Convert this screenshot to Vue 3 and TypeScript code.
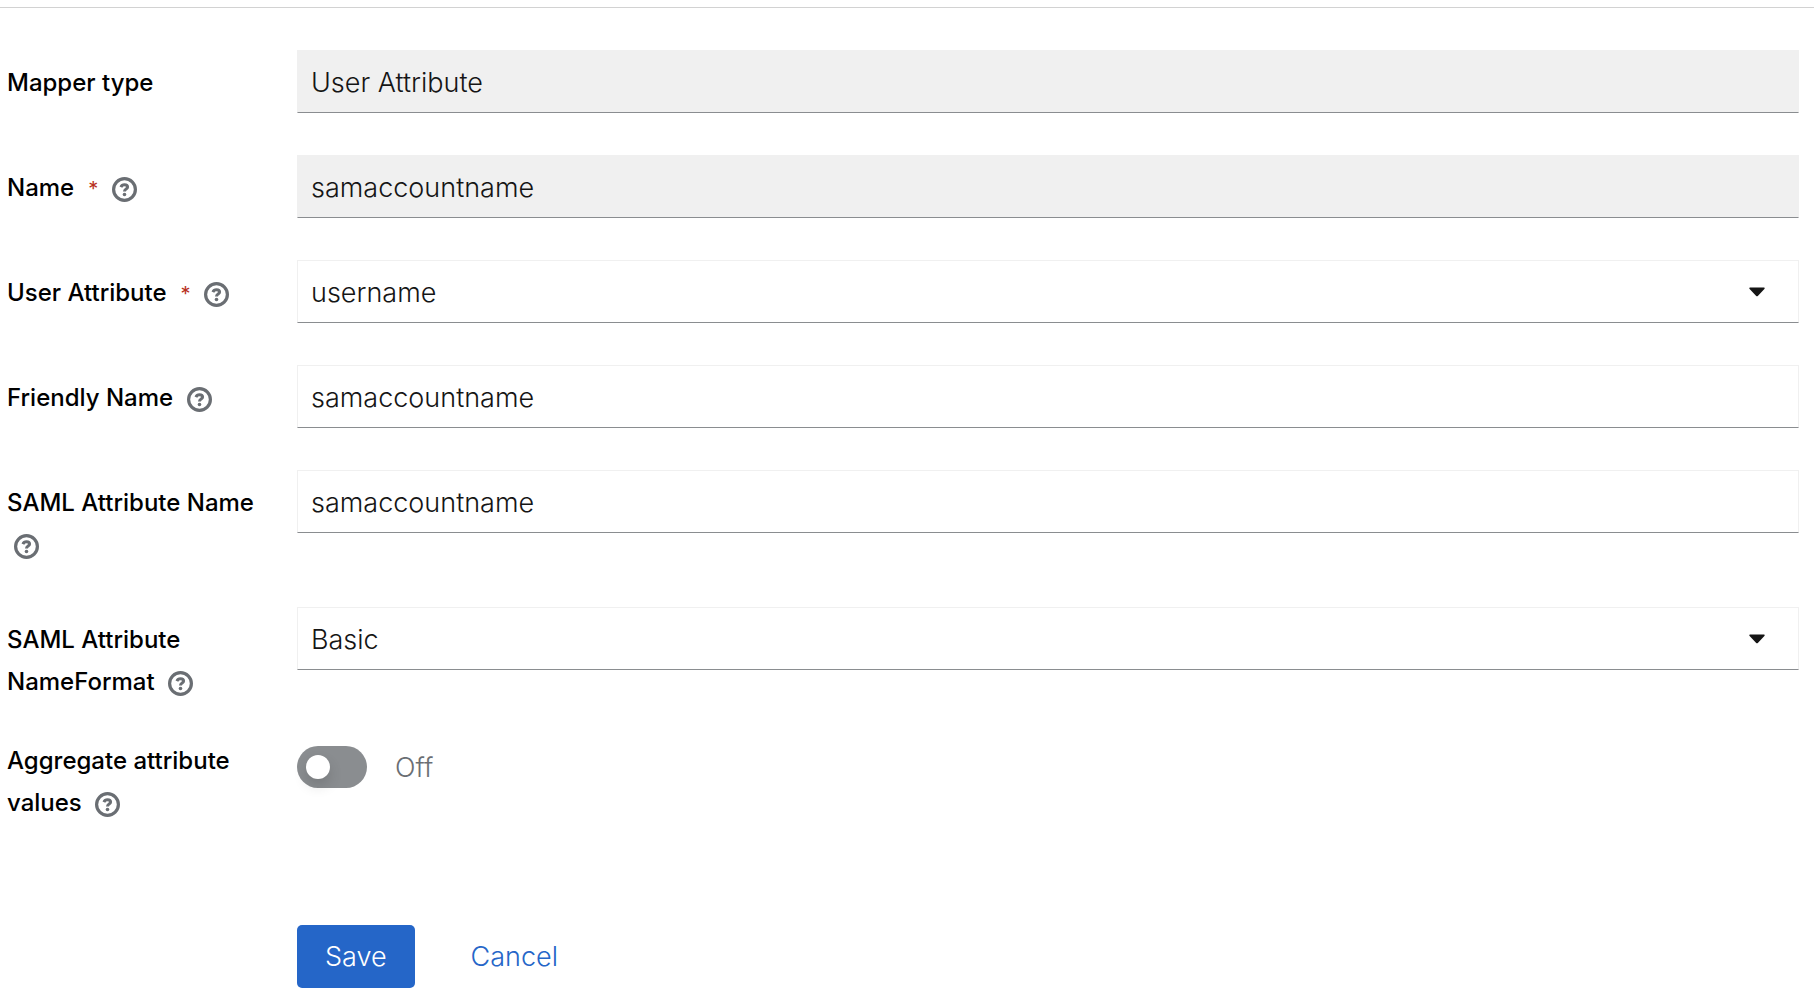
<script setup lang="ts">
import { reactive } from 'vue'

interface Field {
  id: string
  label: string
  kind: 'text' | 'select' | 'switch'
  required?: boolean
  help?: boolean
  readonly?: boolean
  options?: string[]
}

const fields: Field[] = [
  { id: 'mapperType', label: 'Mapper type', kind: 'text', readonly: true },
  { id: 'name', label: 'Name', kind: 'text', required: true, help: true, readonly: true },
  { id: 'userAttribute', label: 'User Attribute', kind: 'select', required: true, help: true, options: ['username'] },
  { id: 'friendlyName', label: 'Friendly Name', kind: 'text', help: true },
  { id: 'attributeName', label: 'SAML Attribute Name', kind: 'text', help: true },
  { id: 'nameFormat', label: 'SAML Attribute NameFormat', kind: 'select', help: true, options: ['Basic'] },
  { id: 'aggregate', label: 'Aggregate attribute values', kind: 'switch', help: true },
]

const values = reactive<Record<string, string>>({
  mapperType: 'User Attribute',
  name: 'samaccountname',
  userAttribute: 'username',
  friendlyName: 'samaccountname',
  attributeName: 'samaccountname',
  nameFormat: 'Basic',
})
const flags = reactive<Record<string, boolean>>({ aggregate: false })
</script>

<template>
  <main class="page">
    <form class="form" @submit.prevent>
      <div v-for="f in fields" :key="f.id" class="row" :class="{ 'row-switch': f.kind === 'switch' }">
        <div class="label-cell">
          <label class="label" :for="f.id">{{ f.label }}<span v-if="f.required" class="required" aria-hidden="true">*</span></label>
          {{ ' ' }}
          <button v-if="f.help" type="button" class="help" :aria-label="'Help for ' + f.label">
            <svg viewBox="0 0 25 25" aria-hidden="true">
              <circle cx="12.5" cy="12.5" r="10.9" fill="none" stroke="currentColor" stroke-width="3.2" />
              <path d="M8.9 10.1C9.6 8.5 10.8 7.8 12.5 7.8C14.5 7.8 15.6 8.8 15.6 10.1C15.6 12.1 12.5 12 12.5 14.4" fill="none" stroke="currentColor" stroke-width="3" />
              <circle cx="12.5" cy="17.5" r="1.8" fill="currentColor" />
            </svg>
          </button>
        </div>

        <input
          v-if="f.kind === 'text'"
          :id="f.id"
          v-model="values[f.id]"
          class="control"
          type="text"
          :readonly="f.readonly"
        />
        <div v-else-if="f.kind === 'select'" class="select-wrap">
          <select :id="f.id" v-model="values[f.id]" class="control">
            <option v-for="o in f.options" :key="o" :value="o">{{ o }}</option>
          </select>
          <svg class="caret" viewBox="0 0 16 10" aria-hidden="true">
            <path d="M1 0.5H15Q16.2 0.9 15.4 2L8.8 8.9Q8 9.7 7.2 8.9L0.6 2Q-0.2 0.9 1 0.5Z" fill="currentColor" />
          </svg>
        </div>
        <div v-else class="switch">
          <input :id="f.id" v-model="flags[f.id]" class="toggle" type="checkbox" role="switch" />
          <span class="state">{{ flags[f.id] ? 'On' : 'Off' }}</span>
        </div>
      </div>

      <div class="actions">
        <button type="submit" class="btn primary">Save</button>
        <button type="button" class="btn link">Cancel</button>
      </div>
    </form>
  </main>
</template>

<style>
body {
  background: #fff;
}
</style>

<style scoped>
.page {
  margin-top: 7px;
  border-top: 1px solid #d2d2d2;
  padding: 42px 15px 6px 7px;
  font-family: Inter, "Liberation Sans", sans-serif;
  font-size: 27px;
  font-weight: 300;
  color: #151515;
}
.form {
  display: flex;
  flex-direction: column;
  gap: 42px;
}
.row {
  display: grid;
  grid-template-columns: 262px minmax(0, 1fr);
  column-gap: 28px;
  align-items: start;
}
.label-cell {
  padding-top: 12px;
  margin-bottom: -1px;
  font-size: 24px;
  line-height: 42px;
  font-weight: 500;
  color: #000;
}
.required {
  margin-left: 14px;
  font-size: 20px;
  font-weight: 400;
  color: #b8301c;
}
.help {
  width: 25px;
  height: 25px;
  margin: 0 0 0 7px;
  padding: 0;
  border: 0;
  background: none;
  color: #6a6e73;
  vertical-align: -6px;
  line-height: 0;
}
.help svg {
  display: block;
  width: 25px;
  height: 25px;
}
.control {
  display: block;
  box-sizing: border-box;
  width: 100%;
  height: 63px;
  margin: 0;
  padding: 1px 13px 0;
  border: 1px solid #f0f0f0;
  border-bottom-color: #8a8d90;
  border-radius: 0;
  background: #fff;
  color: #151515;
  font: inherit;
  appearance: none;
}
.control:read-only:not(select) {
  background: #f0f0f0;
}
.select-wrap {
  position: relative;
}
.caret {
  position: absolute;
  top: 27px;
  right: 34px;
  width: 16px;
  height: 10px;
  color: #151515;
  pointer-events: none;
}
.row-switch .label-cell {
  padding-top: 0;
}
.row-switch {
  margin-top: -4px;
}
.switch {
  display: flex;
  align-items: center;
  gap: 28px;
  padding-top: 6px;
}
.toggle {
  appearance: none;
  width: 70px;
  height: 42px;
  margin: 0;
  padding: 9px;
  box-sizing: border-box;
  border-radius: 21px;
  background: #8a8d90;
}
.toggle::before {
  content: "";
  display: block;
  width: 24px;
  height: 24px;
  border-radius: 50%;
  background: #fff;
  box-shadow: 0 7px 14px rgba(3, 3, 3, 0.14);
}
.toggle:checked {
  background: #2566c8;
}
.toggle:checked::before {
  margin-left: 28px;
}
.state {
  color: #6a6e73;
}
.actions {
  display: flex;
  gap: 28px;
  margin: 60px 0 0 290px;
}
.btn {
  height: 63px;
  padding: 0 28px;
  border: 0;
  border-radius: 5px;
  font: inherit;
}
.primary {
  background: #2566c8;
  color: #fff;
}
.link {
  background: none;
  color: #2566c8;
}
</style>
